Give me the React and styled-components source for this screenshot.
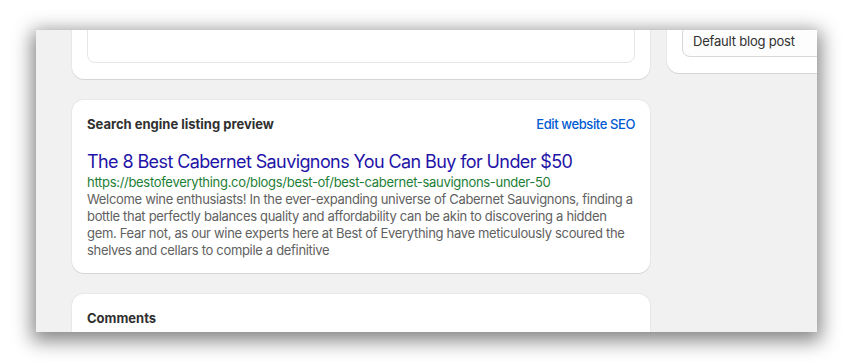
import React from "react";
import styled, { createGlobalStyle } from "styled-components";

const GlobalStyle = createGlobalStyle`
  html, body {
    margin: 0;
    padding: 0;
    background: #ffffff;
  }
  body {
    font-family: Inter, "Noto Sans", "Liberation Sans", sans-serif;
    -webkit-font-smoothing: antialiased;
  }
`;

const Stage = styled.div`
  width: 852px;
  height: 362px;
  padding: 30px 0 0 36px;
  box-sizing: border-box;
  overflow: hidden;
`;

const Window = styled.div`
  width: 781px;
  height: 302px;
  background: #f1f1f1;
  overflow: hidden;
  box-shadow: 0 5px 18px 4px rgba(0, 0, 0, 0.48);
`;

// content scrolled up; the first cards are partly out of view
const Scroller = styled.div`
  display: flex;
  gap: 17px;
  padding-left: 36px;
  margin-top: -71px;
`;

const Main = styled.div`
  width: 578px;
  flex: none;
  display: flex;
  flex-direction: column;
  gap: 21px;
`;

const Side = styled.div`
  width: 260px;
  flex: none;
`;

const Card = styled.div`
  background: #ffffff;
  border-radius: 12px;
  box-shadow: 0 1px 0 rgba(26, 26, 26, 0.09), 0 0 0 1px rgba(26, 26, 26, 0.04);
  padding: ${(p) => p.$pad || "15px"};
`;

const EditorBox = styled.div`
  height: 89px;
  border: 1px solid #e6e6e6;
  border-radius: 8px;
  box-sizing: border-box;
`;

const CardHeader = styled.div`
  display: flex;
  justify-content: space-between;
  align-items: center;
  height: 18px;
`;

const CardTitle = styled.h2`
  margin: 0;
  font-size: 13px;
  line-height: 18px;
  font-weight: 650;
  color: #303030;
`;

const HeaderLink = styled.a`
  font-size: 13px;
  line-height: 18px;
  color: #005bd3;
  text-decoration: none;
  font-weight: 450;
  letter-spacing: -0.4px;
`;

const Preview = styled.div`
  margin-top: 17px;
`;

const PreviewTitle = styled.div`
  font-size: 18px;
  line-height: 24px;
  color: #1f14a8;
  font-weight: 400;
  letter-spacing: -0.6px;
`;

const PreviewUrl = styled.div`
  font-size: 13px;
  line-height: 17px;
  color: #1d7e35;
  letter-spacing: -0.3px;
`;

const PreviewText = styled.p`
  margin: 0;
  font-size: 13px;
  line-height: 17px;
  color: #616161;
  letter-spacing: -0.32px;
`;

const SelectBox = styled.div`
  height: 32px;
  border: 1px solid #d8d8d8;
  border-radius: 8px;
  background: #fdfdfd;
  display: flex;
  align-items: center;
  padding: 0 10px;
  box-sizing: border-box;
  font-size: 13px;
  color: #303030;
  letter-spacing: -0.2px;
`;

export default function App() {
  return (
    <>
      <GlobalStyle />
      <Stage>
        <Window>
          <Scroller>
            <Main>
              <Card $pad="15px 15px 16px">
                <EditorBox />
              </Card>
              <Card $pad="15px 15px 14px">
                <CardHeader>
                  <CardTitle>Search engine listing preview</CardTitle>
                  <HeaderLink href="#">Edit website SEO</HeaderLink>
                </CardHeader>
                <Preview>
                  <PreviewTitle>
                    The 8 Best Cabernet Sauvignons You Can Buy for Under $50
                  </PreviewTitle>
                  <PreviewUrl>
                    https://bestofeverything.co/blogs/best-of/best-cabernet-sauvignons-under-50
                  </PreviewUrl>
                  <PreviewText>
                    Welcome wine enthusiasts! In the ever-expanding universe of
                    Cabernet Sauvignons, finding a bottle that perfectly balances
                    quality and affordability can be akin to discovering a hidden
                    gem. Fear not, as our wine experts here at Best of Everything
                    have meticulously scoured the shelves and cellars to compile a
                    definitive
                  </PreviewText>
                </Preview>
              </Card>
              <Card $pad="15px 15px 40px">
                <CardHeader>
                  <CardTitle>Comments</CardTitle>
                </CardHeader>
              </Card>
            </Main>
            <Side>
              <Card $pad="66px 15px 16px">
                <SelectBox>Default blog post</SelectBox>
              </Card>
            </Side>
          </Scroller>
        </Window>
      </Stage>
    </>
  );
}
